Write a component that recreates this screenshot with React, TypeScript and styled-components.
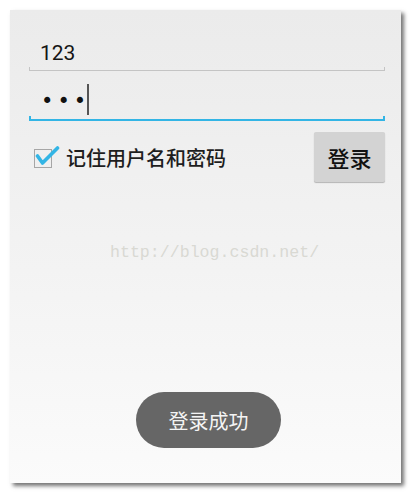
import React from "react";
import styled, { createGlobalStyle } from "styled-components";

const GlobalStyle = createGlobalStyle`
  html, body {
    margin: 0;
    padding: 0;
    background: #ffffff;
  }
  body {
    font-family: Roboto, "Noto Sans CJK SC", sans-serif;
  }
`;

const Page = styled.div`
  padding: 10px 0 0 10px;
  width: 413px;
  height: 495px;
  box-sizing: border-box;
`;

const Screen = styled.div`
  width: 391px;
  height: 473px;
  box-sizing: border-box;
  padding: 13px 16px 35px 19px;
  display: flex;
  flex-direction: column;
  background: linear-gradient(#ebebeb, #f3f3f3 55%, #fbfbfb);
  box-shadow: 3px 3px 4px rgba(0, 0, 0, 0.55);
`;

const Field = styled.div<{ $focused?: boolean }>`
  position: relative;
  height: ${(p) => (p.$focused ? 50 : 48)}px;
  box-sizing: border-box;
  display: flex;
  align-items: flex-end;
  padding: 0 0 6px 11px;
  font-size: 21px;
  line-height: 24px;
  color: #151515;

  &::after {
    content: "";
    position: absolute;
    left: 0;
    right: 0;
    bottom: 0;
    height: ${(p) => (p.$focused ? 5 : 4)}px;
    border: ${(p) => (p.$focused ? "2px solid #33b5e5" : "1px solid #c4c4c4")};
    border-top: none;
    box-sizing: border-box;
  }
`;

const Dots = styled.span`
  font-family: "DejaVu Sans", sans-serif;
  font-size: 21px;
  letter-spacing: 4px;
  color: #111;
  margin-left: 1px;
  margin-bottom: 2px;
`;

const Cursor = styled.span`
  display: inline-block;
  width: 2px;
  height: 31px;
  background: #555;
  margin-left: -3px;
  margin-bottom: 0;
`;

const OptionRow = styled.div`
  margin-top: 11px;
  display: flex;
  align-items: center;
  justify-content: space-between;
`;

const Remember = styled.label`
  display: flex;
  align-items: center;
  gap: 14px;
  padding-left: 5px;
  font-family: "Noto Sans CJK SC", sans-serif;
  font-size: 20px;
  font-weight: 500;
  color: #1e1e1e;
`;

const Box = styled.span`
  position: relative;
  width: 18px;
  height: 19px;
  border: 1.5px solid #a6a6a6;
  box-sizing: border-box;
  margin-top: 2px;

  svg {
    position: absolute;
    left: -1.5px;
    top: -3.5px;
  }
`;

const LoginButton = styled.button`
  width: 71px;
  height: 50px;
  border: none;
  border-radius: 2px;
  background: #d3d3d3;
  box-shadow: 0 1px 1px rgba(0, 0, 0, 0.25);
  font-family: "Noto Sans CJK SC", sans-serif;
  font-size: 22px;
  font-weight: 500;
  color: #111;
  padding: 0;
`;

const Watermark = styled.div`
  margin: 61px 0 0 81px;
  font-family: "Liberation Mono", monospace;
  font-size: 16.6px;
  line-height: 20px;
  color: #d9d9d3;
`;

const Toast = styled.div`
  margin-top: auto;
  align-self: center;
  margin-left: 3px;
  width: 145px;
  height: 56px;
  border-radius: 28px;
  background: #666666;
  display: flex;
  align-items: center;
  justify-content: center;
  font-family: "Noto Sans CJK SC", sans-serif;
  font-size: 20px;
  color: #f4f4f4;
`;

const CheckIcon = () => (
  <svg width="26" height="24" viewBox="0 0 26 24">
    <path
      d="M3.5 10 L8.5 17 L23.5 2"
      fill="none"
      stroke="#33b5e5"
      strokeWidth="3.6"
      strokeLinecap="round"
      strokeLinejoin="round"
    />
  </svg>
);

export default function App() {
  return (
    <>
      <GlobalStyle />
      <Page>
        <Screen>
          <Field>123</Field>
          <Field $focused>
            <Dots>•••</Dots>
            <Cursor />
          </Field>
          <OptionRow>
            <Remember>
              <Box>
                <CheckIcon />
              </Box>
              记住用户名和密码
            </Remember>
            <LoginButton>登录</LoginButton>
          </OptionRow>
          <Watermark>http://blog.csdn.net/</Watermark>
          <Toast>登录成功</Toast>
        </Screen>
      </Page>
    </>
  );
}
